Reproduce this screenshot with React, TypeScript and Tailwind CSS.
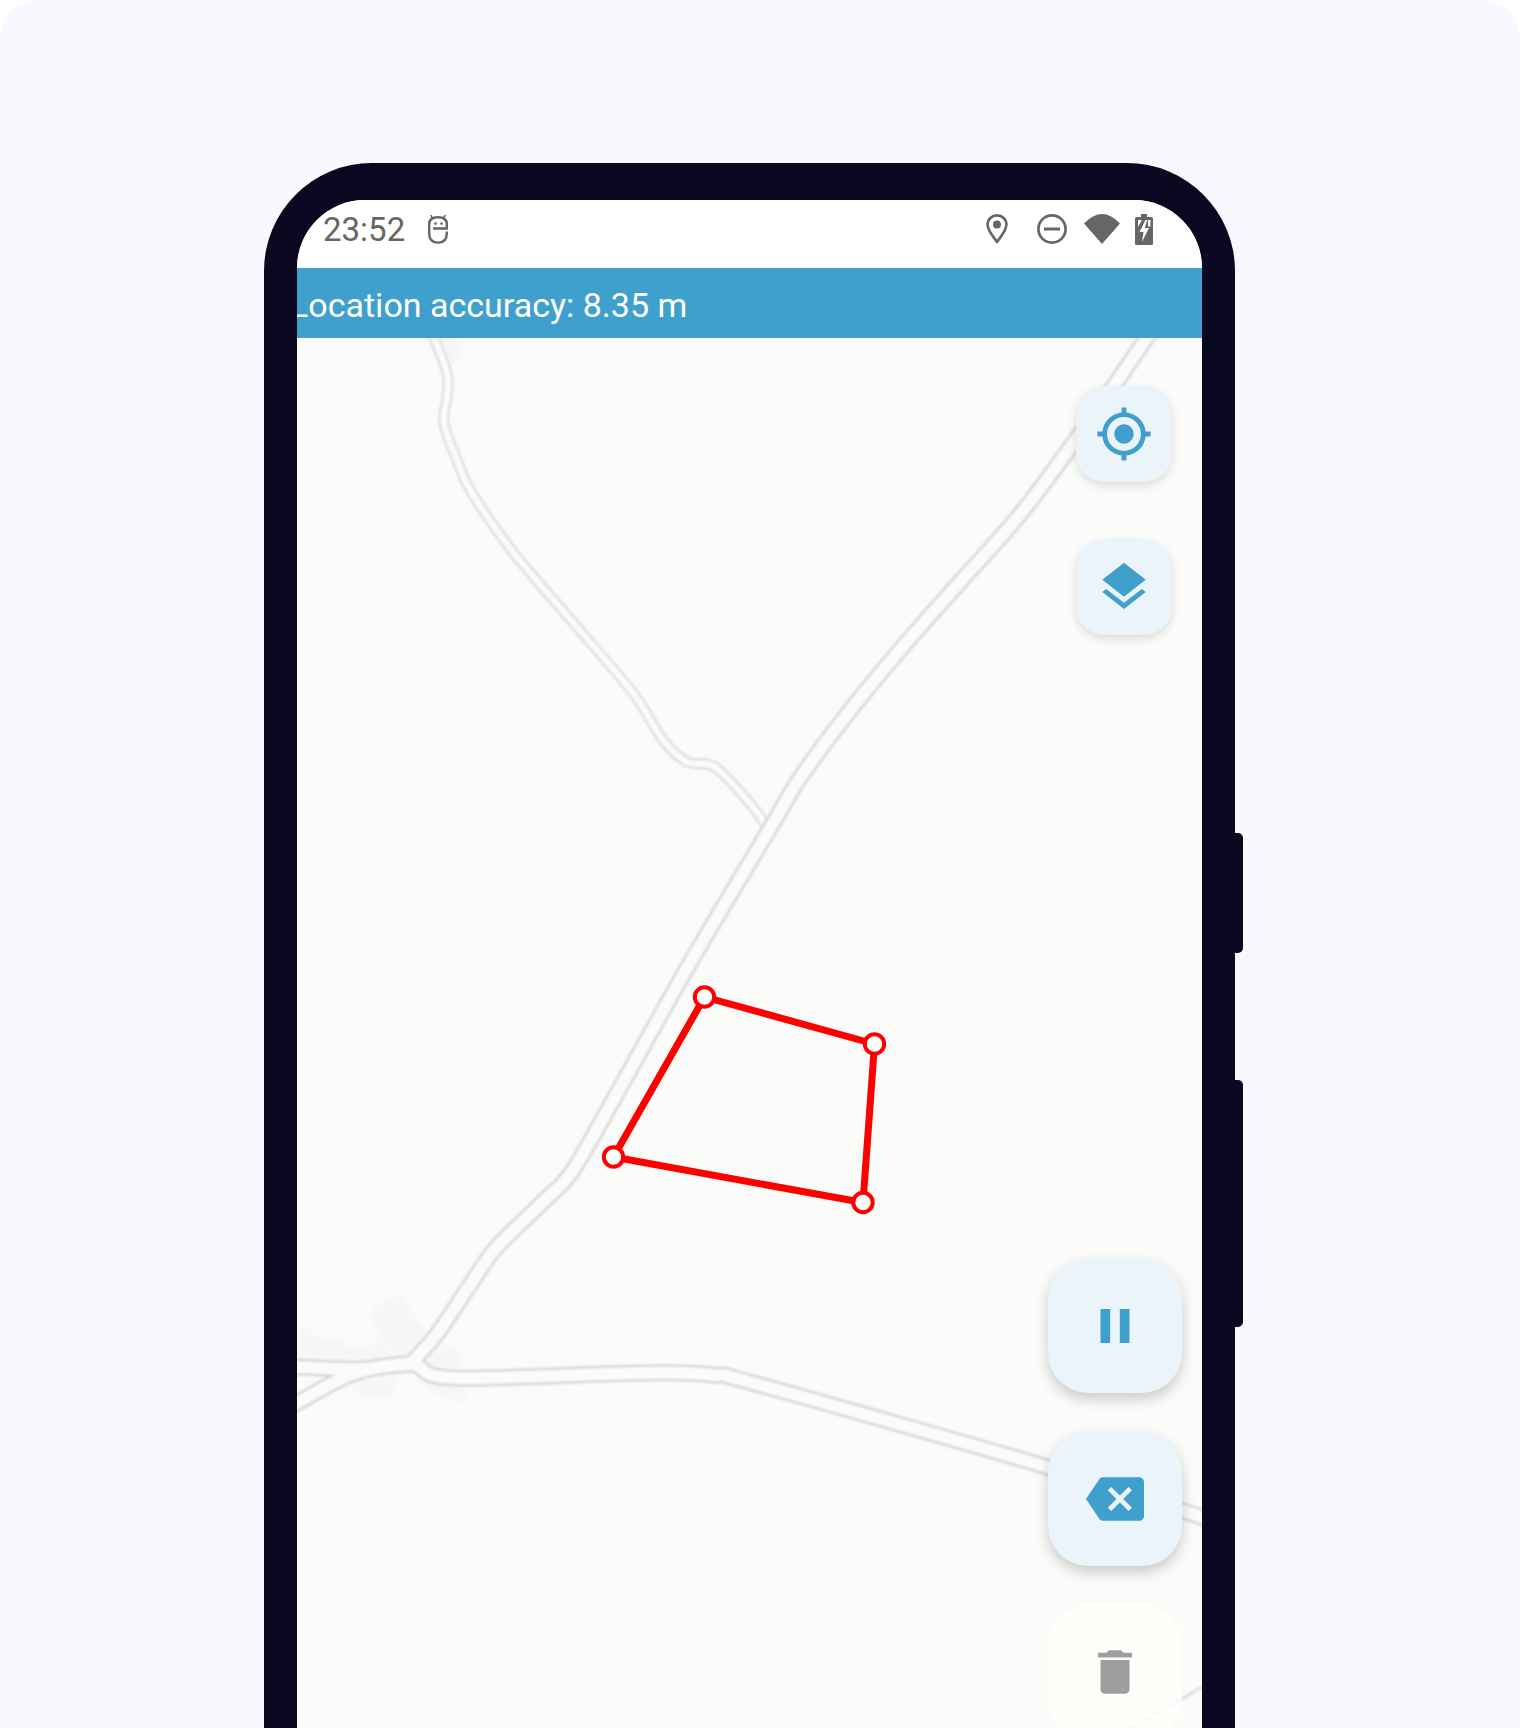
import type { ReactNode } from 'react'
import { MdBackspace, MdDelete, MdGpsFixed, MdLayers, MdPause } from 'react-icons/md'

type Point = [number, number]

// catmull-rom through the points, the roads on the tile have no hard corners
function smoothPath(points: Point[]) {
  let d = `M${points[0][0]} ${points[0][1]}`
  for (let i = 0; i < points.length - 1; i++) {
    const p0 = points[Math.max(i - 1, 0)]
    const p1 = points[i]
    const p2 = points[i + 1]
    const p3 = points[Math.min(i + 2, points.length - 1)]
    const c1 = [p1[0] + (p2[0] - p0[0]) / 6, p1[1] + (p2[1] - p0[1]) / 6]
    const c2 = [p2[0] - (p3[0] - p1[0]) / 6, p2[1] - (p3[1] - p1[1]) / 6]
    d += ` C${c1[0]} ${c1[1]} ${c2[0]} ${c2[1]} ${p2[0]} ${p2[1]}`
  }
  return d
}

// map is drawn in page coordinates, the viewBox starts where the map starts
const mainRoads = [
  smoothPath([
    [1150, 333],
    [1090, 420],
    [1022, 512],
    [960, 582],
    [900, 650],
    [845, 717],
    [800, 778],
    [775, 820],
    [690, 963],
    [620, 1088],
    [573, 1170],
    [545, 1200],
    [497, 1247],
    [470, 1285],
    [437, 1334],
    [412, 1362],
  ]),
  smoothPath([
    [297, 1367],
    [360, 1369],
    [412, 1364],
    [453, 1378],
    [640, 1373],
    [713, 1375],
    [760, 1385],
    [1047, 1467],
    [1210, 1520],
  ]),
  smoothPath([
    [292, 1406],
    [343, 1378],
    [375, 1368],
    [412, 1364],
  ]),
]

const thinRoad = smoothPath([
  [432, 333],
  [447, 373],
  [447, 397],
  [444, 423],
  [457, 460],
  [472, 493],
  [513, 552],
  [577, 627],
  [633, 693],
  [663, 740],
  [687, 762],
  [707, 764],
  [722, 773],
  [753, 807],
  [766, 826],
])

const buildings = [
  '370,1310 400,1293 420,1323 430,1330 403,1358 380,1340',
  '297,1330 308,1327 322,1340 340,1337 350,1347 380,1343 403,1358 297,1358',
  '353,1393 363,1378 400,1377 390,1397 367,1398',
  '420,1360 440,1348 460,1350 463,1367 445,1370',
  '413,1377 450,1385 472,1388 460,1403 433,1393',
  '437,338 460,338 460,362 447,362',
]

const vertices = [
  { x: 704.5, y: 997 },
  { x: 874.5, y: 1044 },
  { x: 863, y: 1202.5 },
  { x: 613.5, y: 1157 },
]

function MapLayer() {
  return (
    <svg className="absolute inset-0" width="905" height="1390" viewBox="297 338 905 1390" fill="none">
      <g fill="#f6f6f5" className="blur-[2px]">
        {buildings.map((points) => (
          <polygon key={points} points={points} />
        ))}
      </g>
      <g strokeLinejoin="round" className="blur-[0.8px]">
        <path d={thinRoad} stroke="#dcdcdb" strokeWidth="11" />
        <path d={thinRoad} stroke="#fbfbf9" strokeWidth="6.5" />
        <path d="M1202 1687 L1170 1706 L1130 1728" stroke="#d5e2e8" strokeWidth="3" />
        {mainRoads.map((d) => (
          <path key={d} d={d} stroke="#d6d6d5" strokeWidth="17" />
        ))}
        {mainRoads.map((d) => (
          <path key={d} d={d} stroke="#fbfbf9" strokeWidth="12" />
        ))}
      </g>
      <polygon points={vertices.map((v) => `${v.x},${v.y}`).join(' ')} stroke="#ff0000" strokeWidth="7" strokeLinejoin="round" />
      {vertices.map((v) => (
        <circle key={v.x} cx={v.x} cy={v.y} r="9.7" fill="#ffffff" stroke="#ff0000" strokeWidth="4" />
      ))}
    </svg>
  )
}

function StatusIcons() {
  return (
    <div className="flex items-center">
      <svg width="22" height="30" viewBox="0 0 22 30" fill="none" className="mr-[29px]">
        <path d="M11 28 C7 22 1.6 17 1.6 10.6 C1.6 5.4 5.8 1.4 11 1.4 C16.2 1.4 20.4 5.4 20.4 10.6 C20.4 17 15 22 11 28 Z" stroke="#666666" strokeWidth="2.6" strokeLinejoin="round" />
        <circle cx="11" cy="10.6" r="4" fill="#666666" />
      </svg>
      <svg width="30" height="30" viewBox="0 0 30 30" fill="none" className="mr-[17px]">
        <circle cx="15" cy="15" r="13.6" stroke="#666666" strokeWidth="2.7" />
        <path d="M7 15 H23" stroke="#666666" strokeWidth="2.8" />
      </svg>
      <svg width="36" height="30" viewBox="0 0 36 30" className="mr-[15px]">
        <path d="M0 9.5 Q18 -9.5 36 9.5 L18 30 Z" fill="#666666" />
      </svg>
      <svg width="18" height="31" viewBox="0 0 18 31">
        <path d="M6 0 H12 V3 H16.5 Q18 3 18 4.5 V29.5 Q18 31 16.5 31 H1.5 Q0 31 0 29.5 V4.5 Q0 3 1.5 3 H6 Z" fill="#666666" />
        <path d="M3 6 H7 L3 13 Z M13 6 H15.5 V12.5 H13 Z" fill="#ffffff" />
        <path d="M10.5 6 L4.5 18 H8.5 L7 28 L14 14 H9.8 L12.2 6 Z" fill="#ffffff" />
      </svg>
    </div>
  )
}

function MapButton({ large, muted, children }: { large?: boolean; muted?: boolean; children: ReactNode }) {
  if (large) {
    return (
      <button
        className={
          muted
            ? 'flex h-[134px] w-[134px] items-center justify-center rounded-[40px] bg-[#fefefc]/85 text-[#9e9e9e]'
            : 'flex h-[134px] w-[134px] items-center justify-center rounded-[40px] bg-[#ebf4fa] text-[#3fa0cd] shadow-[0_6px_14px_rgba(0,0,0,0.2)]'
        }
      >
        {children}
      </button>
    )
  }
  return (
    <button className="flex h-[96px] w-[96px] items-center justify-center rounded-[28px] bg-[#ebf4fa] text-[#3fa0cd] shadow-[0_4px_10px_rgba(0,0,0,0.12)]">
      {children}
    </button>
  )
}

export default function App() {
  return (
    <div className="h-[1728px] overflow-hidden bg-white [font-family:Roboto,sans-serif]">
      <div className="h-full rounded-t-[36px] bg-[#faf8fe] pl-[264px] pt-[163px]">
        <div className="relative h-[1565px] w-[971px] rounded-t-[108px] bg-[#0a0820] px-[33px] pt-[37px]">
          <div className="absolute -right-[8px] top-[670px] h-[120px] w-[8px] rounded-r-[5px] bg-[#0a0820]" />
          <div className="absolute -right-[8px] top-[917px] h-[247px] w-[8px] rounded-r-[5px] bg-[#0a0820]" />

          <div className="flex h-full flex-col overflow-hidden rounded-t-[68px] bg-[#fbfbf9]">
            <div className="flex h-[68px] shrink-0 items-center justify-between bg-white pb-[10px] pl-[26px] pr-[49px]">
              <div className="flex items-center gap-[22px]">
                <span className="text-[33px] leading-none text-[#666666]">23:52</span>
                <svg width="22" height="30" viewBox="0 0 22 30" fill="none">
                  <path d="M2.2 15 V10 Q2.2 3.2 11 3.2 Q19.8 3.2 19.8 10 V14.5 H6" stroke="#666666" strokeWidth="2.4" />
                  <path d="M2.2 15 V19.5 Q2.2 28.6 11 28.6 Q19.8 28.6 19.8 19.5 V17.5" stroke="#666666" strokeWidth="2.4" />
                  <path d="M3.5 1 L5.8 4.5 M18.5 1 L16.2 4.5" stroke="#666666" strokeWidth="1.4" />
                  <circle cx="8.5" cy="9.6" r="1.3" fill="#666666" />
                  <circle cx="14.5" cy="9.6" r="1.3" fill="#666666" />
                </svg>
              </div>
              <StatusIcons />
            </div>

            <div className="flex h-[70px] shrink-0 items-center overflow-hidden bg-[#3fa0cd] pt-[3px]">
              <span className="-ml-[7px] whitespace-nowrap text-[34px] leading-none text-white">Location accuracy: 8.35 m</span>
            </div>

            <div className="relative flex-1 overflow-hidden">
              <MapLayer />
              <div className="absolute right-[30px] top-[48px] flex flex-col gap-[57px]">
                <MapButton>
                  <MdGpsFixed size={58} />
                </MapButton>
                <MapButton>
                  <MdLayers size={58} />
                </MapButton>
              </div>
              <div className="absolute right-[20px] top-[921px] flex flex-col gap-[39px]">
                <MapButton large>
                  <MdPause size={58} />
                </MapButton>
                <MapButton large>
                  <MdBackspace size={58} />
                </MapButton>
                <MapButton large muted>
                  <MdDelete size={58} />
                </MapButton>
              </div>
            </div>
          </div>
        </div>
      </div>
    </div>
  )
}
